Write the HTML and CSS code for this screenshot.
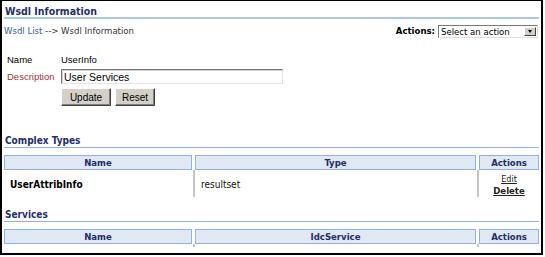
FILE: index.html
```html
<!DOCTYPE html>
<html>
<head>
<meta charset="utf-8">
<title>Wsdl Information</title>
<link rel="stylesheet" href="styles.css">
</head>
<body>
<div class="frame">
  <div class="title">Wsdl Information</div>
  <div class="crumbbar">
    <div class="crumbs"><a class="crumb-link">Wsdl List</a> --&gt; Wsdl Information</div>
    <div class="actions">
      <span class="actions-label">Actions:</span>
      <div class="select"><span class="select-text">Select an action</span><span class="select-btn"><span class="arrow"></span></span></div>
    </div>
  </div>
  <div class="form">
    <div class="label">Name</div>
    <div class="value">UserInfo</div>
    <div class="label label-req">Description</div>
    <div class="field"><input class="input" type="text" value="User Services"></div>
    <div class="spacer"></div>
    <div class="buttons"><button class="btn btn-update">Update</button><button class="btn btn-reset">Reset</button></div>
  </div>
  <div class="section">Complex Types</div>
  <div class="grid">
    <div class="th">Name</div>
    <div class="th">Type</div>
    <div class="th">Actions</div>
    <div class="td td-name">UserAttribInfo</div>
    <div class="td td-type sep">resultset</div>
    <div class="td td-actions sep"><a class="act">Edit</a><a class="act act-del">Delete</a></div>
  </div>
  <div class="section section-2">Services</div>
  <div class="grid">
    <div class="th">Name</div>
    <div class="th">IdcService</div>
    <div class="th">Actions</div>
    <div class="stub"></div>
    <div class="stub sep"></div>
    <div class="stub sep"></div>
  </div>
</div>
</body>
</html>
```
FILE: styles.css
```css
* { box-sizing: border-box; }
html, body { margin: 0; padding: 0; background: #fff; }
body {
  width: 545px;
  height: 257px;
  overflow: hidden;
  font-family: "DejaVu Sans Condensed", "DejaVu Sans", sans-serif;
  font-stretch: condensed;
  color: #000;
}
.frame {
  width: 543px;
  height: 255px;
  border-style: solid;
  border-color: #000;
  border-width: 1px 2px 2px 2px;
  padding: 0 2px;
}
.title {
  font-weight: bold;
  font-size: 10.5px;
  line-height: 12px;
  height: 18px;
  padding: 4px 0 0 1px;
  border-bottom: 2px solid #a9c8ef;
  color: #1f2e6c;
}
.crumbbar {
  margin-top: 6px;
  height: 13px;
  display: flex;
  justify-content: space-between;
  align-items: flex-start;
}
.crumbs {
  font-size: 9.5px;
  line-height: 12px;
  color: #333;
  padding-left: 0;
}
.crumb-link { color: #3a5b9b; text-decoration: none; }
.actions {
  display: flex;
  align-items: flex-start;
  gap: 3px;
  margin-right: 1px;
}
.actions-label {
  font-weight: bold;
  font-size: 9.5px;
  line-height: 12px;
}
.select {
  width: 100px;
  height: 13px;
  display: flex;
  align-items: center;
  background: #fff;
  border: 1px solid;
  border-color: #7a7a7a #e0ddd6 #e0ddd6 #7a7a7a;
}
.select-text {
  flex: 1;
  font-size: 9.5px;
  line-height: 11px;
  padding-left: 2px;
  color: #000;
}
.select-btn {
  width: 12px;
  height: 9px;
  margin-right: 1px;
  background: #d4d0c8;
  border: 1px solid;
  border-color: #fff #404040 #404040 #fff;
  display: flex;
  align-items: center;
  justify-content: center;
}
.arrow {
  width: 0;
  height: 0;
  border-left: 2.5px solid transparent;
  border-right: 2.5px solid transparent;
  border-top: 3px solid #000;
}
.form {
  margin-top: 15px;
  padding-left: 3px;
  display: grid;
  grid-template-columns: 54px 1fr;
  font-family: "Liberation Sans", Arial, sans-serif;
  font-stretch: normal;
}
.label, .value {
  font-size: 9.5px;
  line-height: 14px;
}
.label-req {
  color: #a63232;
  margin-top: 2px;
  line-height: 15px;
}
.field { margin-top: 2px; height: 15px; }
.input {
  display: block;
  width: 222px;
  height: 15px;
  margin: 0;
  padding: 0 2px;
  font-family: "Liberation Sans", Arial, sans-serif;
  font-size: 10.5px;
  color: #000;
  background: #fff;
  border: 1px solid;
  border-color: #7a7a7a #e4e2dc #e4e2dc #7a7a7a;
  box-shadow: inset 1px 1px 0 #cfcfcf;
  outline: none;
}
.buttons {
  margin-top: 4px;
  display: flex;
  gap: 4px;
}
.btn {
  height: 18px;
  margin: 0;
  padding: 0;
  font-family: "Liberation Sans", Arial, sans-serif;
  font-size: 10px;
  color: #000;
  background: #d4d0c8;
  border: 1px solid;
  border-color: #fff #404040 #404040 #fff;
  box-shadow: inset -1px -1px 0 #808080;
}
.btn-update { width: 50px; }
.btn-reset { width: 40px; }
.section {
  margin-top: 28px;
  height: 14px;
  font-weight: bold;
  font-size: 10px;
  line-height: 13px;
  padding-left: 1px;
  color: #1f2e6c;
  border-bottom: 1px solid #8db3e6;
}
.section-2 { margin-top: 11px; }
.grid {
  margin-top: 7px;
  display: grid;
  grid-template-columns: 188px 281px 60px;
  column-gap: 3px;
}
.th {
  height: 15px;
  border: 1px solid #8eb2e4;
  background: #dfe8f3;
  text-align: center;
  font-weight: bold;
  font-size: 9.5px;
  line-height: 13px;
  color: #1f2e6c;
}
.td {
  height: 27px;
  font-size: 10px;
  line-height: 27px;
  padding-top: 1px;
}
.td-name { font-weight: bold; padding-left: 6px; }
.td-type { padding-left: 6px; color: #111; }
.sep { box-shadow: -2px 0 0 #c4c4c4; }
.td-actions {
  display: flex;
  flex-direction: column;
  align-items: center;
  padding-top: 4px;
  line-height: 11px;
}
.act {
  font-size: 9px;
  color: #222;
  text-decoration: underline;
}
.act-del { font-weight: bold; font-size: 9.5px; }
.stub { height: 3px; }
```
